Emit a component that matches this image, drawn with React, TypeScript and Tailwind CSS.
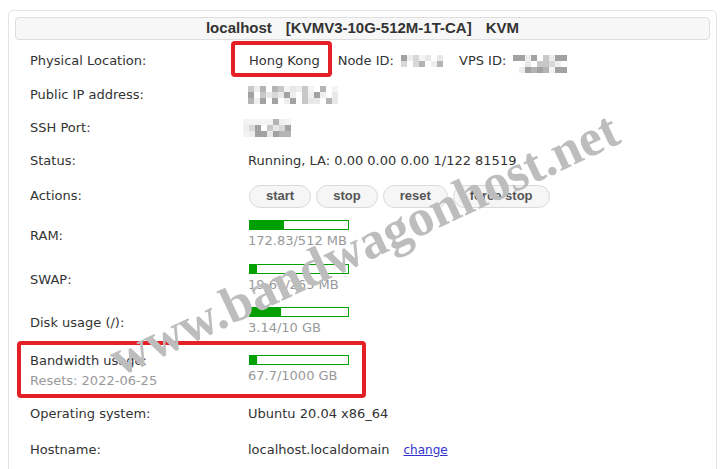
import React from 'react';

const sans = "font-['DejaVu_Sans',Verdana,sans-serif]";

function Mosaic({ cols, rows, seed, cell = 6 }: { cols: number; rows: number; seed: number; cell?: number }) {
  const shades = ['#f4f4f4', '#e8e8e8', '#d8d8d8', '#c8c8c8', '#b4b4b4', '#a2a2a2', '#ffffff', '#eeeeee'];
  let s = seed;
  const next = () => {
    s = (s * 9301 + 49297) % 233280;
    return s / 233280;
  };
  const cells = [];
  for (let r = 0; r < rows; r++) {
    for (let c = 0; c < cols; c++) {
      cells.push(
        <rect key={`${r}-${c}`} x={c * cell} y={r * cell} width={cell} height={cell} fill={shades[Math.floor(next() * shades.length)]} />
      );
    }
  }
  return (
    <svg width={cols * cell} height={rows * cell} className="block">
      {cells}
    </svg>
  );
}

function Bar({ pct, text }: { pct: number; text: string }) {
  return (
    <div className="flex flex-col pb-[3px]">
      <div className="ml-px h-[10px] w-[100px] border border-[#00a000] bg-white">
        <div className="h-full bg-[#00a000]" style={{ width: `${pct}%` }} />
      </div>
      <div className="mt-[3px] text-[13px] leading-[16px] text-[#999]">{text}</div>
    </div>
  );
}

function Row({ label, h, children, sub }: { label: string; h: string; children: React.ReactNode; sub?: string }) {
  return (
    <div className={`relative flex items-center ${h}`}>
      <div className="w-[218px] shrink-0 text-[13px] leading-[16px] text-[#333]">
        <div>{label}</div>
        {sub && <div className="mt-[4px] text-[#999]">{sub}</div>}
      </div>
      <div className="flex items-center text-[13px] leading-[16px] text-[#333]">{children}</div>
    </div>
  );
}

const actions = ['start', 'stop', 'reset', 'force stop'];

export default function App() {
  return (
    <div className={`relative h-[469px] w-[727px] overflow-hidden bg-white pl-[8px] pr-[10px] pt-[10px] ${sans}`}>
      <div className="h-[480px] rounded-[5px] border border-[#e4e4e4] px-[6px] pt-[6px]">
        {/* header */}
        <div className="flex h-[23px] items-center justify-center gap-[14px] rounded-[4px] border border-[#dedede] bg-[#f7f7f7] font-['Liberation_Sans',Arial,sans-serif] text-[15px] font-bold text-[#333]">
          <span>localhost</span>
          <span>[KVMV3-10G-512M-1T-CA]</span>
          <span>KVM</span>
        </div>

        <div className="mt-[4px] pl-[15px]">
          <Row label="Physical Location:" h="h-[34px]">
            <span className="relative ml-px">
              Hong Kong
              <span className="absolute -bottom-[8px] -left-[18px] -right-[12px] -top-[12px] rounded-[4px] border-[4px] border-[#e41f26]" />
            </span>
            <span className="ml-[18px]">Node ID:</span>
            <span className="ml-[7px]">
              <Mosaic cols={7} rows={2} seed={11} />
            </span>
            <span className="ml-[16px]">VPS ID:</span>
            <span className="ml-[7px] mt-[6px]">
              <Mosaic cols={9} rows={3} seed={37} />
            </span>
          </Row>
          <Row label="Public IP address:" h="h-[34px]">
            <Mosaic cols={15} rows={3} seed={5} />
          </Row>
          <Row label="SSH Port:" h="h-[32px]">
            <span className="-ml-[5px]">
              <Mosaic cols={8} rows={3} seed={71} />
            </span>
          </Row>
          <Row label="Status:" h="h-[34px]">
            Running, LA: 0.00 0.00 0.00 1/122 81519
          </Row>
          <Row label="Actions:" h="h-[36px]">
            <div className="ml-px flex gap-[5px]">
              {actions.map(a => (
                <button
                  key={a}
                  className="h-[23px] rounded-full border border-[#d9d9d9] bg-[#f6f6f6] px-4 font-['Liberation_Sans',Arial,sans-serif] text-[13px] font-bold text-[#555]"
                >
                  {a}
                </button>
              ))}
            </div>
          </Row>
          <Row label="RAM:" h="h-[44px]">
            <Bar pct={34.4} text="172.83/512 MB" />
          </Row>
          <Row label="SWAP:" h="h-[44px]">
            <Bar pct={7.4} text="19.61/265 MB" />
          </Row>
          <Row label="Disk usage (/):" h="h-[42px]">
            <Bar pct={31.4} text="3.14/10 GB" />
          </Row>
          <Row label="Bandwidth usage:" sub="Resets: 2022-06-25" h="h-[54px]">
            <Bar pct={6.8} text="67.7/1000 GB" />
            <span className="absolute -left-[13px] -top-[3px] h-[57px] w-[349px] rounded-[4px] border-[4px] border-[#e41f26]" />
          </Row>
          <Row label="Operating system:" h="h-[32px]">
            Ubuntu 20.04 x86_64
          </Row>
          <Row label="Hostname:" h="h-[40px]">
            localhost.localdomain
            <a href="#" className="ml-[14px] text-[12px] text-[#3333cc] underline">
              change
            </a>
          </Row>
        </div>
      </div>

      {/* watermark */}
      <div className="pointer-events-none absolute left-[364px] top-[244px] -translate-x-1/2 -translate-y-1/2 -rotate-[25deg] whitespace-nowrap font-['Liberation_Serif','Times_New_Roman',serif] text-[52px] font-bold leading-none text-[#bdbdbd]">
        www.bandwagonhost.net
      </div>
    </div>
  );
}
